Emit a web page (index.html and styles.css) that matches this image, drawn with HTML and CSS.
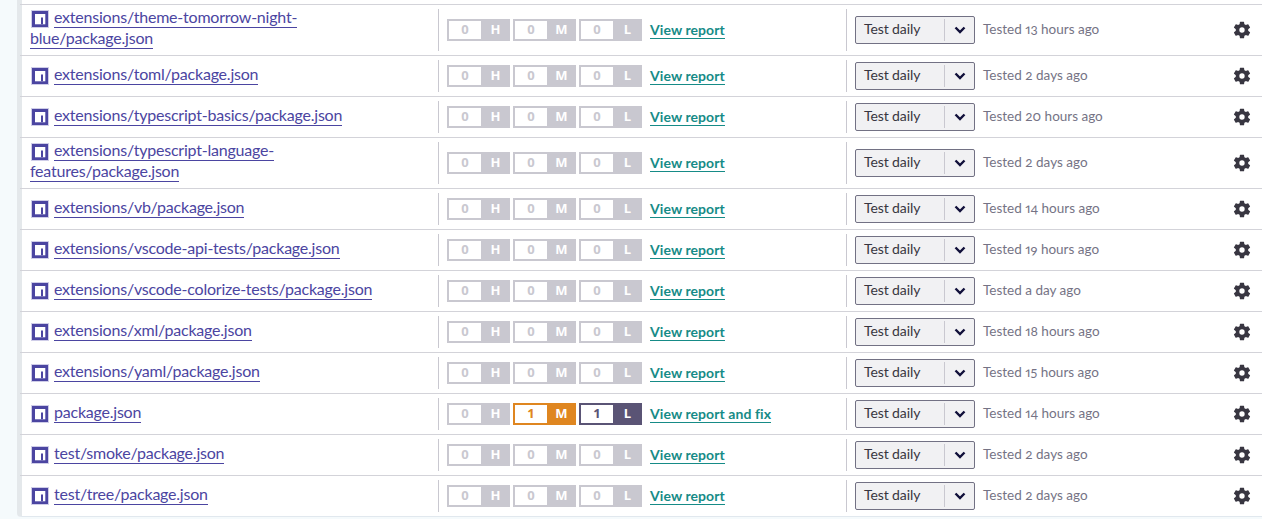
FILE: index.html
```
<!DOCTYPE html>
<html lang="en">
<head>
<meta charset="utf-8">
<title>Projects</title>
<link rel="stylesheet" href="styles.css">
</head>
<body>
<main class="panel" id="projects"></main>
<script src="app.js"></script>
</body>
</html>
```

FILE: styles.css
```
* { box-sizing: border-box; }
body {
  margin: 0;
  height: 519px;
  overflow: hidden;
  background: #f5fafc;
  font-family: Lato, "Open Sans", sans-serif;
  padding-left: 17px;
}
.panel {
  height: 517px;
  background: #fff;
  border-left: 5px solid #e4e8eb;
  border-bottom: 1px solid #e1e8ee;
  border-bottom-left-radius: 4px;
  padding-top: 4px;
}
.row {
  display: grid;
  grid-template-columns: 416px 408px 1fr;
  height: 41px;
  margin-left: -2px;
  padding-left: 2px;
  border-top: 1px solid #d3d3d9;
}
.row.tall { height: 51px; }
.name {
  display: flex;
  flex-direction: column;
  justify-content: center;
  padding: 1px 0 0 8px;
  font-size: 16px;
  line-height: 21px;
  color: #4b45a1;
}
.row.tall .name { padding-top: 0; }
.line { display: flex; height: 21px; }
.npm { width: 18px; height: 18px; margin: 1px 5px 0 1px; flex: none; }
.path {
  height: 19px;
  line-height: 16px;
  border-bottom: 1px solid #4b45a1;
  white-space: nowrap;
  letter-spacing: -0.22px;
}
.issues, .schedule {
  display: flex;
  align-items: center;
  margin: 4px 0;
  border-left: 1px solid #c9c8d0;
  padding-left: 8px;
}
.badges { display: flex; gap: 3px; }
.badge {
  display: flex;
  width: 63px;
  height: 22px;
  border: 2px solid #c9c8d0;
  background: #c9c8d0;
  color: #c9c8d0;
  font-family: "Open Sans", sans-serif;
  font-size: 13px;
  font-weight: 700;
  line-height: 17px;
  text-align: center;
}
.badge .count { width: 32px; background: #fff; }
.badge .level { width: 27px; color: #fff; padding-left: 2px; }
.badge.medium { border-color: #df8620; background: #df8620; color: #df8620; }
.badge.low { border-color: #5a5475; background: #5a5475; color: #5a5475; }
.report {
  margin: 0 0 0 8px;
  height: 18px;
  line-height: 17px;
  font-size: 14px;
  font-weight: 700;
  letter-spacing: 0.08px;
  color: #168b87;
  border-bottom: 1px solid #168b87;
  white-space: nowrap;
}
.select {
  display: flex;
  align-items: center;
  width: 120px;
  height: 28px;
  border: 1px solid #727184;
  border-radius: 2px;
  background: #f1f1f3;
  font-size: 14px;
  color: #383641;
}
.select .value { width: 89px; height: 22px; line-height: 20px; padding-left: 8px; border-right: 1px solid #c9c8d0; letter-spacing: -0.1px; }
.chevron { width: 12px; height: 8px; margin-left: 9px; }
.tested { margin: -2px 0 0 8px; font-size: 13.5px; line-height: 20px; color: #757385; font-feature-settings: "onum", "pnum"; }
.gear { width: 20px; height: 20px; margin: 0 10px 0 auto; fill: #383641; }
```

FILE: app.js
```
const rows = [
  [["extensions/theme-tomorrow-night-", "blue/package.json"], "13 hours ago"],
  [["extensions/toml/package.json"], "2 days ago"],
  [["extensions/typescript-basics/package.json"], "20 hours ago"],
  [["extensions/typescript-language-", "features/package.json"], "2 days ago"],
  [["extensions/vb/package.json"], "14 hours ago"],
  [["extensions/vscode-api-tests/package.json"], "19 hours ago"],
  [["extensions/vscode-colorize-tests/package.json"], "a day ago"],
  [["extensions/xml/package.json"], "18 hours ago"],
  [["extensions/yaml/package.json"], "15 hours ago"],
  [["package.json"], "14 hours ago", true],
  [["test/smoke/package.json"], "2 days ago"],
  [["test/tree/package.json"], "2 days ago"]
];
const npm = '<svg class="npm" viewBox="0 0 18 18"><path fill="#cfcde8" d="M0 0h18v18H0z"/><path fill="#4b45a1" d="M1 1h16v16H1z"/><path fill="#fff" d="M4 4h10.300v10.300H4z"/><path fill="#4b45a1" d="M10 7.500h2v6.800h-2z"/></svg>';
const gear = '<svg class="gear" viewBox="0 0 24 24"><path d="M19.4 13c.04-.3.06-.7.06-1s-.02-.7-.06-1l2.1-1.65c.2-.15.25-.4.12-.64l-2-3.46c-.12-.22-.38-.3-.6-.22l-2.5 1a7.3 7.3 0 0 0-1.7-.98l-.38-2.65A.5.5 0 0 0 14 2h-4a.5.5 0 0 0-.5.42L9.14 5.1c-.6.24-1.17.57-1.7.97l-2.48-1c-.23-.08-.48 0-.6.22l-2 3.46c-.13.22-.08.48.12.64L4.6 11a8 8 0 0 0 0 2l-2.12 1.65c-.2.15-.25.4-.12.64l2 3.46c.12.22.38.3.6.22l2.5-1c.52.4 1.08.73 1.68.98l.38 2.65c.04.24.24.4.48.4h4c.25 0 .46-.16.5-.4l.36-2.66c.6-.24 1.18-.57 1.7-.97l2.48 1c.23.08.48 0 .6-.22l2-3.46c.13-.22.08-.48-.12-.64zM12 15.200a3.200 3.200 0 1 1 0-6.400 3.200 3.200 0 0 1 0 6.400z"/></svg>';
const chevron = '<svg class="chevron" viewBox="0 0 12 8"><path d="M1.5 1.5 6 6l4.500-4.500" fill="none" stroke="#11103a" stroke-width="2.400"/></svg>';
const badge = (level, count, kind) => `<span class="badge ${count ? kind : ""}"><span class="count">${count}</span><span class="level">${level}</span></span>`;

document.getElementById("projects").innerHTML = rows.map(([lines, time, fix]) => `
<div class="row ${lines.length > 1 ? "tall" : ""}">
  <div class="name">${lines.map((text, i) => `<div class="line">${i ? "" : npm}<span class="path">${text}</span></div>`).join("")}</div>
  <div class="issues"><div class="badges">${badge("H", 0)}${badge("M", fix ? 1 : 0, "medium")}${badge("L", fix ? 1 : 0, "low")}</div><span class="report">View report${fix ? " and fix" : ""}</span></div>
  <div class="schedule"><div class="select"><span class="value">Test daily</span>${chevron}</div><span class="tested">Tested ${time}</span>${gear}</div>
</div>`).join("");
```
